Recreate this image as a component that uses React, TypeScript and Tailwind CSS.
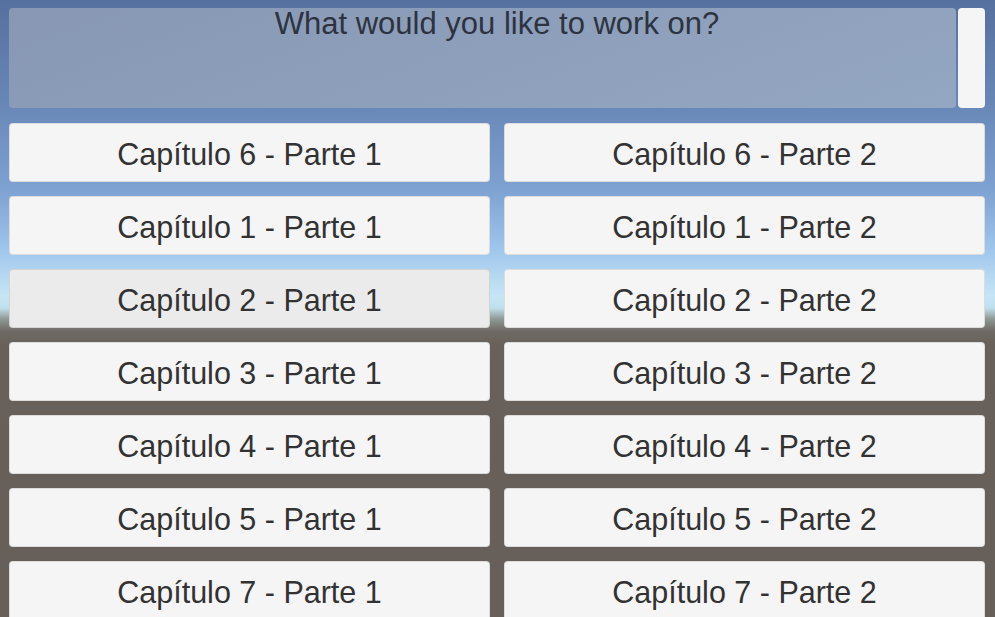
const rows = [6, 1, 2, 3, 4, 5, 7];

function ChapterButton({ label, active }: { label: string; active?: boolean }) {
  return (
    <button
      className={`flex h-[59px] items-center justify-center rounded-[4px] border border-black/10 pt-[3px] text-[30.5px] leading-none text-[#323232] ${
        active ? "bg-[#ebebeb]" : "bg-[#f5f5f5]"
      }`}
    >
      {label}
    </button>
  );
}

export default function App() {
  return (
    <div
      className="h-[617px] w-full overflow-hidden bg-[linear-gradient(180deg,#56709f_0px,#6786b6_100px,#7ea2d2_190px,#9fc6ec_250px,#c6e6f6_296px,#c0dfec_308px,#8f9896_319px,#6f6a65_331px,#68615b_345px,#67605a_617px)] pl-[9px] pr-[10px] pt-[8px]"
      style={{ fontFamily: '"Liberation Sans", Arial, sans-serif' }}
    >
      <div className="relative flex h-[100px] gap-[2px]">
        <div className="flex-1 rounded-[4px] bg-[linear-gradient(160deg,#8898b4,#93a6c2)]" />
        <div className="w-[27px] rounded-[4px] bg-[#f5f5f5]" />
        <div className="absolute inset-x-0 top-0 text-center text-[31px] leading-none text-[#2d3340]">
          What would you like to work on?
        </div>
      </div>
      <div className="mt-[15px] grid grid-cols-2 gap-x-[14px] gap-y-[14px]">
        {rows.map((n) => (
          <div key={n} className="contents">
            <ChapterButton label={`Capítulo ${n} - Parte 1`} active={n === 2} />
            <ChapterButton label={`Capítulo ${n} - Parte 2`} />
          </div>
        ))}
      </div>
    </div>
  );
}
